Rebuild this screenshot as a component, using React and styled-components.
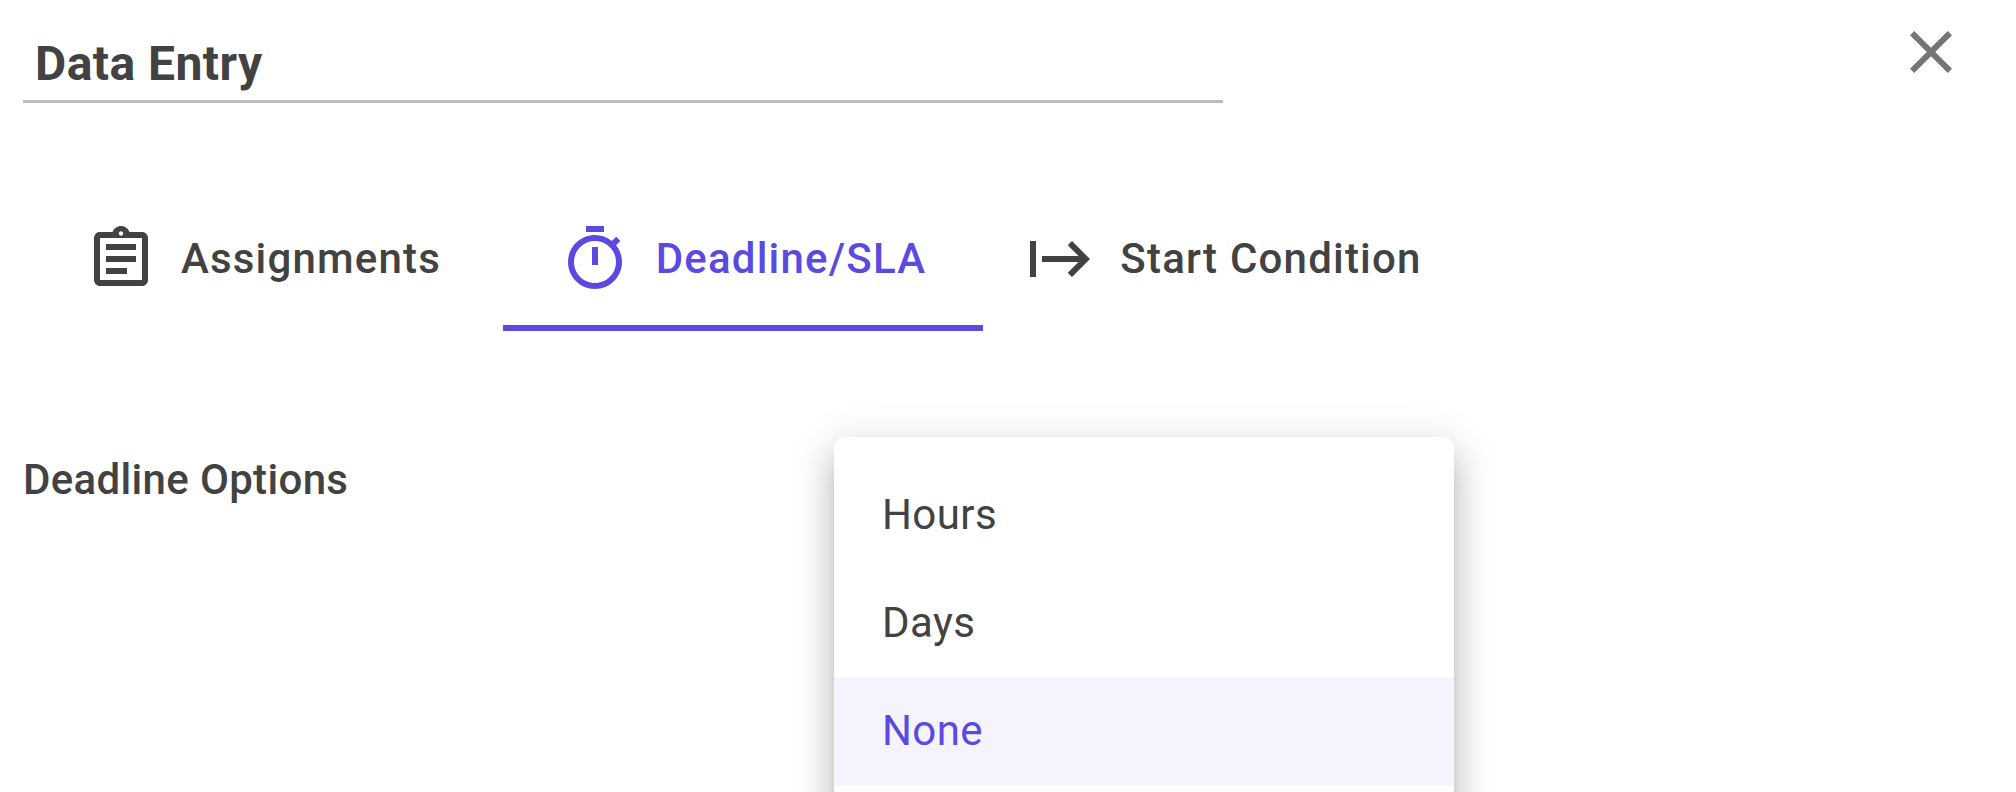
import React, { useState } from "react";
import styled, { createGlobalStyle } from "styled-components";

const tabs = [
  {
    id: "assignments",
    label: "Assignments",
    path: "M7 15h7v2H7zm0-4h10v2H7zm0-4h10v2H7zm12-4h-4.18C14.4 1.84 13.3 1 12 1c-1.3 0-2.4.84-2.82 2H5c-.14 0-.27.01-.4.04-.39.08-.74.28-1.01.55-.18.18-.33.4-.43.64-.1.23-.16.49-.16.77v14c0 .27.06.54.16.78s.25.45.43.64c.27.27.62.47 1.01.55.13.02.26.03.4.03h14c1.1 0 2-.9 2-2V5c0-1.1-.9-2-2-2zm-7-.25c.41 0 .75.34.75.75s-.34.75-.75.75-.75-.34-.75-.75.34-.75.75-.75zM19 19H5V5h14v14z",
  },
  {
    id: "deadline",
    label: "Deadline/SLA",
    path: "M15 1H9v2h6V1zm-4 13h2V8h-2v6zm8.03-6.61l1.42-1.42c-.43-.51-.9-.99-1.41-1.41l-1.42 1.42C16.07 4.74 14.12 4 12 4c-4.97 0-9 4.03-9 9s4.02 9 9 9 9-4.03 9-9c0-2.12-.74-4.07-1.97-5.61zM12 20c-3.87 0-7-3.13-7-7s3.13-7 7-7 7 3.13 7 7-3.13 7-7 7z",
  },
  {
    id: "start",
    label: "Start Condition",
    path: "M14.59 7.41L18.17 11H6v2h12.17l-3.59 3.59L16 18l6-6-6-6-1.41 1.41zM2 6v12h2V6H2z",
  },
];

const options = ["Hours", "Days", "None"];

function App() {
  const [activeTab, setActiveTab] = useState("deadline");
  const [name, setName] = useState("Data Entry");
  const [selected, setSelected] = useState("None");

  return (
    <>
      <GlobalStyle />
      <Panel>
        <Header>
          <NameInput value={name} onChange={(e) => setName(e.target.value)} />
          <CloseButton aria-label="Close">
            <Icon viewBox="0 0 24 24">
              <path d="M19 6.41L17.59 5 12 10.59 6.41 5 5 6.41 10.59 12 5 17.59 6.41 19 12 13.41 17.59 19 19 17.59 13.41 12z" />
            </Icon>
          </CloseButton>
        </Header>
        <TabList>
          {tabs.map((tab) => (
            <Tab
              key={tab.id}
              $active={tab.id === activeTab}
              onClick={() => setActiveTab(tab.id)}
            >
              <Icon viewBox="0 0 24 24">
                <path d={tab.path} />
              </Icon>
              <TabLabel>{tab.label}</TabLabel>
            </Tab>
          ))}
        </TabList>
        <Field>
          <FieldLabel>Deadline Options</FieldLabel>
          <Menu>
            {options.map((option) => (
              <MenuItem
                key={option}
                $selected={option === selected}
                onClick={() => setSelected(option)}
              >
                {option}
              </MenuItem>
            ))}
          </Menu>
        </Field>
      </Panel>
    </>
  );
}

const GlobalStyle = createGlobalStyle`
  * {
    box-sizing: border-box;
  }
  body {
    margin: 0;
    background: #fff;
    color: #424242;
    font-family: Roboto, "Liberation Sans", sans-serif;
    overflow: hidden;
  }
`;

const Panel = styled.main`
  height: 792px;
  padding: 16px 49px 0 23px;
  overflow: hidden;
`;

const Header = styled.header`
  display: flex;
  justify-content: space-between;
  align-items: flex-start;
  height: 87px;
`;

const NameInput = styled.input`
  width: 1200px;
  height: 87px;
  padding: 10px 12px 0;
  border: none;
  border-bottom: 3px solid #bdbdbd;
  outline: none;
  background: transparent;
  color: #424242;
  font-family: inherit;
  font-size: 48px;
  font-weight: 700;
  letter-spacing: 0.45px;
`;

const CloseButton = styled.button`
  display: flex;
  padding: 0;
  border: none;
  background: none;
  color: #757575;
  cursor: pointer;
`;

const Icon = styled.svg`
  width: 72px;
  height: 72px;
  flex-shrink: 0;
  fill: currentColor;
`;

const TabList = styled.nav`
  display: flex;
  margin-top: 84px;
`;

const Tab = styled.button`
  display: flex;
  align-items: center;
  justify-content: center;
  gap: 24.3px;
  width: 480px;
  height: 144px;
  padding: 6px 0.3px 0 0;
  border: none;
  border-bottom: 6px solid ${(props) => (props.$active ? "#5a4ae2" : "transparent")};
  background: none;
  color: ${(props) => (props.$active ? "#5a4ae2" : "#424242")};
  font-family: inherit;
  cursor: pointer;
`;

const TabLabel = styled.span`
  font-size: 42px;
  font-weight: 500;
  line-height: 72px;
  letter-spacing: 1.2px;
  white-space: nowrap;
`;

const Field = styled.section`
  position: relative;
  margin-top: 106px;
`;

const FieldLabel = styled.h2`
  margin: 0;
  padding-top: 18px;
  font-size: 42px;
  font-weight: 500;
  line-height: 50px;
  letter-spacing: 0.33px;
`;

const Menu = styled.ul`
  position: absolute;
  top: 0;
  left: 811px;
  width: 620px;
  height: 480px;
  margin: 0;
  padding: 24px 0;
  border-radius: 12px;
  background: #fff;
  list-style: none;
  box-shadow:
    0 15px 15px -9px rgba(0, 0, 0, 0.2),
    0 24px 30px 3px rgba(0, 0, 0, 0.14),
    0 9px 42px 6px rgba(0, 0, 0, 0.12);
`;

const MenuItem = styled.li`
  height: 108px;
  padding: 0 48px;
  background: ${(props) => (props.$selected ? "#f5f3fe" : "transparent")};
  color: ${(props) => (props.$selected ? "#5a4ae2" : "#424242")};
  font-size: 42px;
  line-height: 108px;
  letter-spacing: 0.4px;
  cursor: pointer;
`;

export default App;
